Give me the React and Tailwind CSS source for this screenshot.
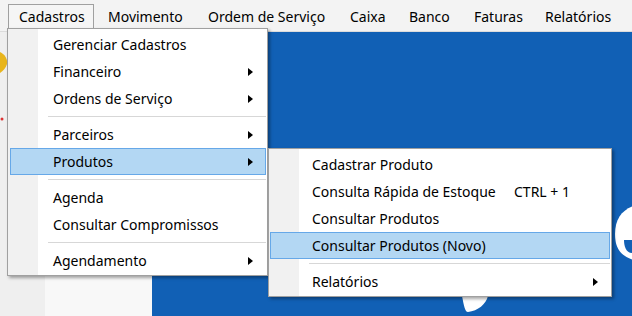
import React from 'react'

const Arrow = () => (
  <svg width="5" height="8" viewBox="0 0 5 8" className="shrink-0">
    <polygon points="0,0 5,4 0,8" fill="#000" />
  </svg>
)

const menuBar = [
  { label: 'Movimento', w: 'w-[103px] pl-[14px]' },
  { label: 'Ordem de Serviço', w: 'w-[142px] pl-[11px]' },
  { label: 'Caixa', w: 'w-[59px] pl-[11px]' },
  { label: 'Banco', w: 'w-[65px] pl-[11px]' },
  { label: 'Faturas', w: 'w-[71px] pl-[11px]' },
  { label: 'Relatórios', w: 'pl-[11px]' }
]

const cadastros = [
  { label: 'Gerenciar Cadastros' },
  { label: 'Financeiro', sub: true },
  { label: 'Ordens de Serviço', sub: true },
  { sep: true },
  { label: 'Parceiros', sub: true },
  { label: 'Produtos', sub: true, active: true },
  { sep: true },
  { label: 'Agenda' },
  { label: 'Consultar Compromissos' },
  { sep: true },
  { label: 'Agendamento', sub: true }
]

const produtos = [
  { label: 'Cadastrar Produto' },
  { label: 'Consulta Rápida de Estoque', shortcut: 'CTRL + 1' },
  { label: 'Consultar Produtos' },
  { label: 'Consultar Produtos (Novo)', active: true },
  { sep: true },
  { label: 'Relatórios', sub: true }
]

const MenuItems = ({ items, labelWidth, indent, itemMargin, arrowPad }) =>
  items.map((item, i) =>
    item.sep ? (
      <div key={i} className="h-[9px] flex items-center ml-[40px] mr-[1px]">
        <div className="w-full h-[1px] bg-[#d7d7d7]" />
      </div>
    ) : (
      <div
        key={i}
        className={`h-[27px] flex items-center border ${itemMargin} ${indent} ${arrowPad} ${
          item.active ? 'bg-[#b3d7f3] border-[#66a8e8]' : 'border-transparent'
        }`}
      >
        <span className={labelWidth}>{item.label}</span>
        {item.shortcut && <span>{item.shortcut}</span>}
        {item.sub && <span className="ml-auto"><Arrow /></span>}
      </div>
    )
  )

export default function App() {
  return (
    <div className="relative w-[632px] h-[316px] overflow-hidden bg-[#f0f0f0] text-[14px] text-black font-['Noto_Sans',sans-serif]">
      {/* menu bar */}
      <div className="h-[32px] flex items-start pt-[4px] bg-[#f3f3f3] border-b border-[#dcdcdc]">
        <div className="ml-[8px] w-[86px] h-[24px] pl-[10px] flex items-center border border-b-0 border-[#a0a0a0] bg-[#f5f5f5]">
          Cadastros
        </div>
        {menuBar.map((m) => (
          <div key={m.label} className={`h-[24px] flex items-center ${m.w}`}>
            {m.label}
          </div>
        ))}
      </div>

      {/* body */}
      <div className="flex h-[284px]">
        <div className="w-[152px] flex">
          <div className="w-[45px] bg-[#efefef] relative">
            <svg width="10" height="80" viewBox="0 0 10 80" className="mt-[18px]">
              <path d="M0 2 C5 4 8 10 7 14 C6 18 3 21 0 23 Z" fill="#e8b51c" />
              <circle cx="2" cy="69" r="1.5" fill="#d33" />
            </svg>
          </div>
          <div className="flex-1 bg-[#f8f8f8]" />
        </div>
        <div className="flex-1 bg-[#1160b5]">
          <svg width="480" height="284" viewBox="0 0 480 284">
            <path d="M500 230 C470 230 463 218 463 202 C463 180 478 171 500 171 Z" fill="#fff" />
            <path d="M480 221 C474 221 472 214 472 208 L480 208 Z" fill="#1160b5" />
            <path d="M310 264 L336 264 C334 272 326 279 316 280 C313 280 312 274 310 264 Z" fill="#fff" />
          </svg>
        </div>
      </div>

      {/* Cadastros dropdown */}
      <div className="absolute left-[7px] top-[28px] w-[261px] border border-[#a0a0a0] pt-[2px] pb-[1px] bg-[linear-gradient(to_right,#f1f1f1_30px,#ffffff_30px)] shadow-[2px_2px_3px_rgba(0,0,0,0.35)]">
        <MenuItems items={cadastros} labelWidth="" indent="pl-[42px]" itemMargin="ml-[2px] mr-[1px]" arrowPad="pr-[12px]" />
      </div>

      {/* Produtos submenu */}
      <div className="absolute left-[268px] top-[148px] w-[344px] border border-[#a0a0a0] pt-[2px] pb-[1px] bg-[linear-gradient(to_right,#f1f1f1_30px,#ffffff_30px)] shadow-[2px_2px_3px_rgba(0,0,0,0.35)]">
        <MenuItems items={produtos} labelWidth="w-[202px]" indent="pl-[41px]" itemMargin="ml-[1px] mr-[1px]" arrowPad="pr-[11px]" />
      </div>
    </div>
  )
}
